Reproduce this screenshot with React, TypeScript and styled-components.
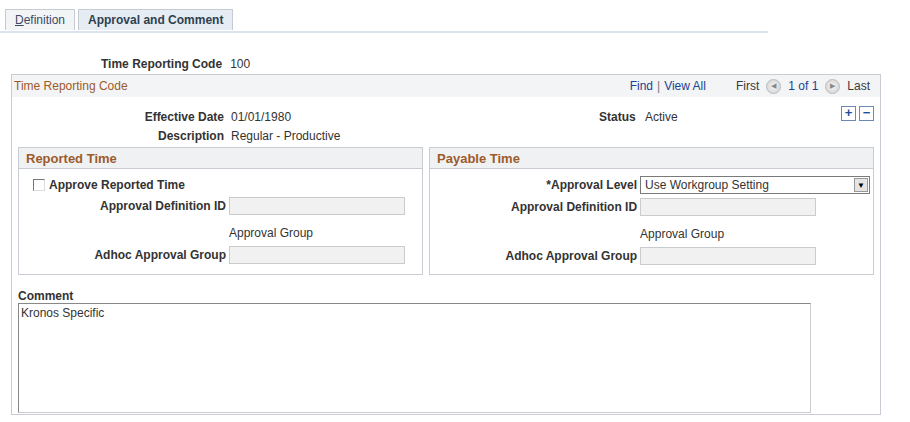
import React from "react";
import styled, { createGlobalStyle } from "styled-components";

const G = createGlobalStyle`
  body { margin:0; background:#fff; font-family: Arial, "Liberation Sans", sans-serif; font-size:12px; color:#333; }
`;
const Page = styled.div`width:910px;height:422px;position:relative;`;
const Tabs = styled.div`display:flex;gap:3px;padding:9px 0 0 5px;width:763px;border-bottom:2px solid #dbe3ee;height:22px;`;
const Tab = styled.div<{ $active?: boolean }>`
  height:20px;padding:0 9px;display:flex;align-items:center;font-size:12px;
  border:1px solid #c6cbd3;border-bottom:none;
  background:${p => p.$active ? "#e6ecf4" : "#f3f4f6"};
  color:${p => p.$active ? "#30404f" : "#3a4a66"};font-weight:${p => p.$active ? "bold" : "normal"};
`;
const TopRow = styled.div`display:flex;gap:8px;margin:23px 0 0 101px;height:16px;align-items:center;`;
const Lbl = styled.span`font-weight:bold;color:#333;`;
const Box = styled.div`margin:2px 0 0 11px;width:868px;height:339px;border:1px solid #c9cdd3;display:flex;flex-direction:column;`;
const BoxHead = styled.div`height:22px;background:#f3f4f5;display:flex;align-items:center;padding:0 10px 0 2px;color:#9c5b2b;font-size:12px;`;
const Nav = styled.div`margin-left:auto;display:flex;align-items:center;gap:4px;color:#3a3a3a;`;
const Link = styled.span`color:#1c3f94;`;
const Arrow = styled.span`width:13px;height:13px;border-radius:50%;background:radial-gradient(#f4f4f4,#cfcfcf);border:1px solid #bbb;display:inline-flex;align-items:center;justify-content:center;font-size:7px;color:#888;margin:0 3px;`;
const InfoGrid = styled.div`display:grid;grid-template-columns:219px 368px 1fr;row-gap:5px;margin-top:13px;position:relative;`;
const R = styled.div`text-align:right;font-weight:bold;padding-right:7px;`;
const V = styled.div``;
const Btns = styled.div`position:absolute;right:6px;top:-4px;display:flex;gap:3px;`;
const SqBtn = styled.div`width:13px;height:13px;border:1px solid #6d88b4;background:#fff;color:#1b4ea0;font-weight:bold;font-size:13px;line-height:12px;text-align:center;`;
const Cols = styled.div`display:flex;gap:6px;padding:0 6px;margin-top:4px;`;
const Sec = styled.div<{ $w: number }>`width:${p => p.$w}px;height:126px;border:1px solid #c9cdd3;`;
const SecHead = styled.div`height:20px;background:#f0f1f3;border-bottom:1px solid #c9cdd3;color:#9c5b2b;font-weight:bold;font-size:13px;padding-left:7px;display:flex;align-items:center;`;
const FGrid = styled.div<{ $l: number }>`display:grid;grid-template-columns:${p => p.$l}px auto;row-gap:4px;align-items:center;margin-top:7px;`;
const FL = styled.div`text-align:right;font-weight:bold;padding-right:3px;height:18px;line-height:18px;`;
const Inp = styled.div<{ $w: number }>`width:${p => p.$w}px;height:18px;border:1px solid #c9cbcd;background:#f1f1f1;box-sizing:border-box;`;
const Plain = styled.div`height:18px;line-height:18px;margin-top:5px;`;
const Check = styled.div`display:flex;align-items:center;gap:4px;font-weight:bold;padding-left:14px;height:18px;margin-top:7px;`;
const Cb = styled.span`width:10px;height:10px;border:1px solid #777;border-right-color:#ddd;border-bottom-color:#ddd;background:#fff;`;
const Sel = styled.div`width:230px;height:18px;border:1px solid #7a7a7a;box-sizing:border-box;display:flex;align-items:center;padding-left:4px;background:#fff;`;
const Drop = styled.span`margin-left:auto;width:14px;height:14px;background:#e4e4e4;border:1px solid #999;box-sizing:border-box;margin-right:1px;font-size:8px;display:flex;align-items:center;justify-content:center;color:#000;`;
const CLabel = styled.div`font-weight:bold;margin:14px 0 0 6px;`;
const TA = styled.div`margin:0 0 0 6px;width:793px;height:110px;border:1px solid #888;border-right-color:#ccc;border-bottom-color:#ccc;box-sizing:border-box;padding:2px 2px;`;

export default function App() {
  return (
    <Page><G />
      <Tabs><Tab><u>D</u>efinition</Tab><Tab $active>Approval and Comment</Tab></Tabs>
      <TopRow><Lbl>Time Reporting Code</Lbl><span>100</span></TopRow>
      <Box>
        <BoxHead>Time Reporting Code
          <Nav><Link>Find</Link><span style={{color:"#777"}}>|</span><Link>View All</Link>
            <span style={{marginLeft:26}}>First</span><Arrow>◀</Arrow><Link>1 of 1</Link><Arrow>▶</Arrow><span>Last</span></Nav>
        </BoxHead>
        <InfoGrid>
          <R>Effective Date</R><V>01/01/1980</V><V><b>Status</b>&nbsp;&nbsp; Active</V>
          <R>Description</R><V>Regular - Productive</V>
          <Btns><SqBtn>+</SqBtn><SqBtn>−</SqBtn></Btns>
        </InfoGrid>
        <Cols>
          <Sec $w={404}>
            <SecHead>Reported Time</SecHead>
            <Check><Cb />Approve Reported Time</Check>
            <FGrid $l={210} style={{marginTop:3}}>
              <FL>Approval Definition ID</FL><Inp $w={176} />
              <div /><Plain>Approval Group</Plain>
              <FL>Adhoc Approval Group</FL><Inp $w={176} />
            </FGrid>
          </Sec>
          <Sec $w={444}>
            <SecHead>Payable Time</SecHead>
            <FGrid $l={210}>
              <FL>*Approval Level</FL><Sel>Use Workgroup Setting<Drop>▼</Drop></Sel>
              <FL>Approval Definition ID</FL><Inp $w={176} />
              <div /><Plain>Approval Group</Plain>
              <FL>Adhoc Approval Group</FL><Inp $w={176} />
            </FGrid>
          </Sec>
        </Cols>
        <CLabel>Comment</CLabel>
        <TA>Kronos Specific</TA>
      </Box>
    </Page>
  );
}
